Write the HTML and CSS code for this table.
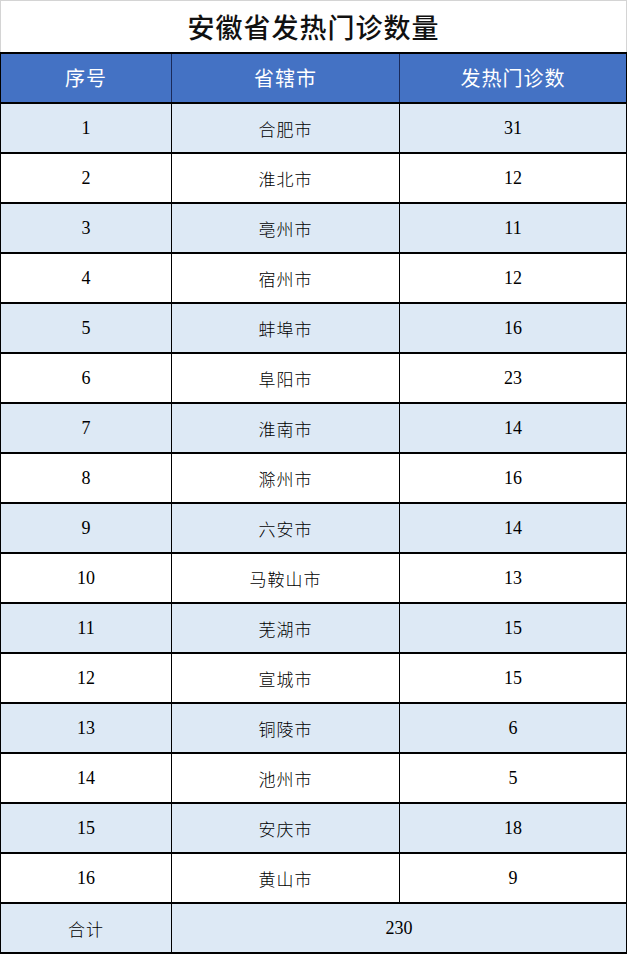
FILE: index.html
```html
<!DOCTYPE html>
<html lang="zh-CN">
<head>
<meta charset="utf-8">
<title>安徽省发热门诊数量</title>
<link rel="stylesheet" href="styles.css">
</head>
<body>
<div class="page">
  <div class="title">安徽省发热门诊数量</div>
  <div class="table">
    <div class="row head"><div class="cell">序号</div><div class="cell">省辖市</div><div class="cell">发热门诊数</div></div>
    <div class="row tint"><div class="cell num">1</div><div class="cell">合肥市</div><div class="cell num">31</div></div>
    <div class="row"><div class="cell num">2</div><div class="cell">淮北市</div><div class="cell num">12</div></div>
    <div class="row tint"><div class="cell num">3</div><div class="cell">亳州市</div><div class="cell num">11</div></div>
    <div class="row"><div class="cell num">4</div><div class="cell">宿州市</div><div class="cell num">12</div></div>
    <div class="row tint"><div class="cell num">5</div><div class="cell">蚌埠市</div><div class="cell num">16</div></div>
    <div class="row"><div class="cell num">6</div><div class="cell">阜阳市</div><div class="cell num">23</div></div>
    <div class="row tint"><div class="cell num">7</div><div class="cell">淮南市</div><div class="cell num">14</div></div>
    <div class="row"><div class="cell num">8</div><div class="cell">滁州市</div><div class="cell num">16</div></div>
    <div class="row tint"><div class="cell num">9</div><div class="cell">六安市</div><div class="cell num">14</div></div>
    <div class="row"><div class="cell num">10</div><div class="cell">马鞍山市</div><div class="cell num">13</div></div>
    <div class="row tint"><div class="cell num">11</div><div class="cell">芜湖市</div><div class="cell num">15</div></div>
    <div class="row"><div class="cell num">12</div><div class="cell">宣城市</div><div class="cell num">15</div></div>
    <div class="row tint"><div class="cell num">13</div><div class="cell">铜陵市</div><div class="cell num">6</div></div>
    <div class="row"><div class="cell num">14</div><div class="cell">池州市</div><div class="cell num">5</div></div>
    <div class="row tint"><div class="cell num">15</div><div class="cell">安庆市</div><div class="cell num">18</div></div>
    <div class="row"><div class="cell num">16</div><div class="cell">黄山市</div><div class="cell num">9</div></div>
    <div class="row tint total"><div class="cell">合计</div><div class="cell num span">230</div></div>
  </div>
</div>
</body>
</html>
```
FILE: styles.css
```css
html, body {
  margin: 0;
  padding: 0;
  background: #ffffff;
}
.page {
  width: 627px;
  font-family: "Noto Sans CJK SC", "Noto Sans", sans-serif;
  color: #000;
}
.title {
  box-sizing: border-box;
  height: 52px;
  border-top: 1px solid #d4d4d4;
  border-left: 1px solid #d4d4d4;
  border-right: 1px solid #d4d4d4;
  text-align: center;
  font-size: 27px;
  font-weight: 500;
  line-height: 52px;
  letter-spacing: 1px;
  color: #111;
}
.table {
  border-left: 1px solid #000;
  border-right: 1px solid #000;
  border-bottom: 2px solid #000;
}
.row {
  box-sizing: border-box;
  display: grid;
  grid-template-columns: 170px 228px 227px;
  height: 50px;
  border-top: 2px solid #000;
  background: #ffffff;
}
.row.tint {
  background: #dde9f5;
}
.row.head {
  background: #4472c4;
  color: #ffffff;
}
.cell {
  display: flex;
  align-items: center;
  justify-content: center;
  font-size: 17px;
  font-weight: 300;
  letter-spacing: 1px;
  line-height: 1;
}
.row.head .cell {
  font-size: 20px;
  font-weight: 400;
  letter-spacing: 1px;
  border-left-color: #1a2a5a;
}
.cell + .cell {
  border-left: 1px solid #000;
}
.num {
  font-family: "Liberation Serif", "DejaVu Serif", serif;
  font-size: 18px;
  font-weight: 400;
  letter-spacing: 0;
}
.span {
  grid-column: 2 / 4;
}
```
